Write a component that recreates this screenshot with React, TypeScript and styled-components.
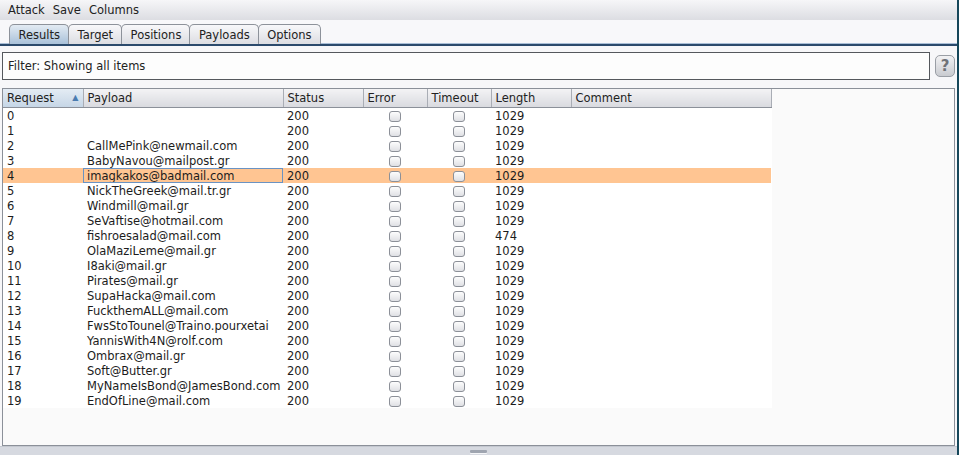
import React from 'react'
import styled, { createGlobalStyle } from 'styled-components'

const GlobalStyle = createGlobalStyle`
  html, body {
    margin: 0;
    padding: 0;
    background: #f7f7f9;
    font-family: "DejaVu Sans", "Noto Sans", sans-serif;
    font-size: 11.5px;
    color: #1c1c1c;
  }
  * { box-sizing: border-box; }
`

interface Row {
  id: number
  payload: string
  status: number
  length: number
}

const payloads = [
  '',
  '',
  'CallMePink@newmail.com',
  'BabyNavou@mailpost.gr',
  'imagkakos@badmail.com',
  'NickTheGreek@mail.tr.gr',
  'Windmill@mail.gr',
  'SeVaftise@hotmail.com',
  'fishroesalad@mail.com',
  'OlaMaziLeme@mail.gr',
  'I8aki@mail.gr',
  'Pirates@mail.gr',
  'SupaHacka@mail.com',
  'FuckthemALL@mail.com',
  'FwsStoTounel@Traino.pourxetai',
  'YannisWith4N@rolf.com',
  'Ombrax@mail.gr',
  'Soft@Butter.gr',
  'MyNameIsBond@JamesBond.com',
  'EndOfLine@mail.com',
]

const rows: Row[] = payloads.map((payload, id) => ({
  id,
  payload,
  status: 200,
  length: id === 8 ? 474 : 1029,
}))

const columns = [
  { key: 'request', label: 'Request', width: 80 },
  { key: 'payload', label: 'Payload', width: 200 },
  { key: 'status', label: 'Status', width: 80 },
  { key: 'error', label: 'Error', width: 64 },
  { key: 'timeout', label: 'Timeout', width: 64 },
  { key: 'length', label: 'Length', width: 80 },
  { key: 'comment', label: 'Comment', width: 200 },
]

const tabs = ['Results', 'Target', 'Positions', 'Payloads', 'Options']
const SELECTED_ROW = 4

const App: React.FC = () => (
  <Window>
    <GlobalStyle />
    <MenuBar>
      <MenuItem>Attack</MenuItem>
      <MenuItem>Save</MenuItem>
      <MenuItem>Columns</MenuItem>
    </MenuBar>
    <TabStrip>
      {tabs.map((t, i) => (
        <Tab key={t} $active={i === 0}>{t}</Tab>
      ))}
    </TabStrip>
    <Body>
      <FilterRow>
        <FilterBox>Filter: Showing all items</FilterBox>
        <HelpButton>?</HelpButton>
      </FilterRow>
      <TablePanel>
        <Table>
          <colgroup>
            {columns.map(c => (
              <col key={c.key} style={{ width: c.width }} />
            ))}
          </colgroup>
          <thead>
            <tr>
              {columns.map((c, i) => (
                <HeadCell key={c.key} $sorted={i === 0}>
                  {c.label}
                  {i === 0 && <SortArrow>▲</SortArrow>}
                </HeadCell>
              ))}
            </tr>
          </thead>
          <tbody>
            {rows.map(r => {
              const sel = r.id === SELECTED_ROW
              return (
                <BodyRow key={r.id} $selected={sel}>
                  <Cell>{r.id}</Cell>
                  <Cell $focused={sel}>{r.payload}</Cell>
                  <Cell>{r.status}</Cell>
                  <CheckCell><Check /></CheckCell>
                  <CheckCell><Check /></CheckCell>
                  <Cell>{r.length}</Cell>
                  <Cell />
                </BodyRow>
              )
            })}
          </tbody>
        </Table>
      </TablePanel>
    </Body>
    <Splitter>
      <Grip />
    </Splitter>
  </Window>
)

const Window = styled.div`
  width: 959px;
  height: 455px;
  display: flex;
  flex-direction: column;
  border-right: 2px solid #16475a;
  overflow: hidden;
`

const MenuBar = styled.div`
  height: 20px;
  display: flex;
  align-items: center;
  gap: 8px;
  padding: 0 8px;
  background: linear-gradient(#f6f6f8, #dcdde2);
`

const MenuItem = styled.span`
  color: #222;
`

const TabStrip = styled.div`
  height: 26px;
  display: flex;
  align-items: flex-end;
  padding: 0 0 0 9px;
  background: #f8f8fa;
  border-bottom: 2px solid #2b4a6c;
  box-shadow: inset 0 -1px 0 #a9bed6;
`

const Tab = styled.div<{ $active?: boolean }>`
  height: 20px;
  padding: 1px 8px 0 8.5px;
  display: flex;
  align-items: center;
  border: 1px solid #8d929a;
  border-bottom: none;
  border-radius: 5px 5px 0 0;
  margin-right: -1px;
  color: #222;
  background: ${p =>
    p.$active
      ? 'linear-gradient(#e3ebf3, #a9c1d9)'
      : 'linear-gradient(#f8f8fa, #dcdde2)'};
`

const Body = styled.div`
  flex: 1;
  display: flex;
  flex-direction: column;
  padding: 6px 2px 0 2px;
  background: #f7f7f9;
`

const FilterRow = styled.div`
  display: flex;
  align-items: center;
  gap: 5px;
`

const FilterBox = styled.div`
  flex: 1;
  height: 28px;
  display: flex;
  align-items: center;
  padding-left: 5px;
  background: #fdfdfd;
  border: 1px solid #55585d;
  color: #222;
`

const HelpButton = styled.div`
  width: 20px;
  height: 22px;
  display: flex;
  align-items: center;
  justify-content: center;
  border: 1px solid #9a9ea5;
  border-radius: 5px;
  background: linear-gradient(#f2f2f4, #c9cbd0);
  color: #6f7278;
  font-weight: bold;
  font-size: 15px;
`

const TablePanel = styled.div`
  margin-top: 8px;
  height: 358px;
  border: 1px solid #8b9099;
  background: #fafafa;
`

const Table = styled.table`
  table-layout: fixed;
  width: 768px;
  border-collapse: collapse;
  background: #fff;
  font-size: 11.5px;
`

const HeadCell = styled.th<{ $sorted?: boolean }>`
  position: relative;
  height: 18px;
  padding: 0 4px;
  text-align: left;
  font-weight: normal;
  color: #222;
  background: ${p =>
    p.$sorted
      ? 'linear-gradient(#e4ecf4, #c6d6e6)'
      : 'linear-gradient(#f3f3f5, #d9dadf)'};
  border-right: 1px solid #a9adb5;
  border-bottom: 1px solid #8b9099;
  white-space: nowrap;
`

const SortArrow = styled.span`
  position: absolute;
  right: 4px;
  top: 4px;
  font-size: 8px;
  color: #4b7cb0;
`

const BodyRow = styled.tr<{ $selected?: boolean }>`
  height: 15px;
  background: ${p => (p.$selected ? '#ffc592' : '#fff')};
`

const Cell = styled.td<{ $focused?: boolean }>`
  height: 15px;
  padding: 1px 4px 0;
  line-height: 14px;
  white-space: nowrap;
  overflow: hidden;
  ${p => (p.$focused ? 'outline: 1px solid #6a93c3; outline-offset: -1px;' : '')}
`

const CheckCell = styled.td`
  height: 15px;
  padding: 0;
  text-align: center;
  vertical-align: middle;
`

const Check = styled.span`
  display: inline-block;
  width: 12px;
  height: 11px;
  margin-top: 3px;
  border: 1px solid #8c9098;
  border-radius: 3px;
  background: linear-gradient(#fdfdfd, #dfe0e4);
  vertical-align: top;
`

const Splitter = styled.div`
  height: 9px;
  display: flex;
  justify-content: center;
  align-items: center;
  background: #d6d9e0;
  border-top: 1px solid #c4c8d0;
`

const Grip = styled.div`
  width: 17px;
  height: 3px;
  margin-left: -1px;
  border-radius: 1px;
  background: #9fa5b0;
  box-shadow: 0 1px 0 #f4f5f7;
`

export default App
